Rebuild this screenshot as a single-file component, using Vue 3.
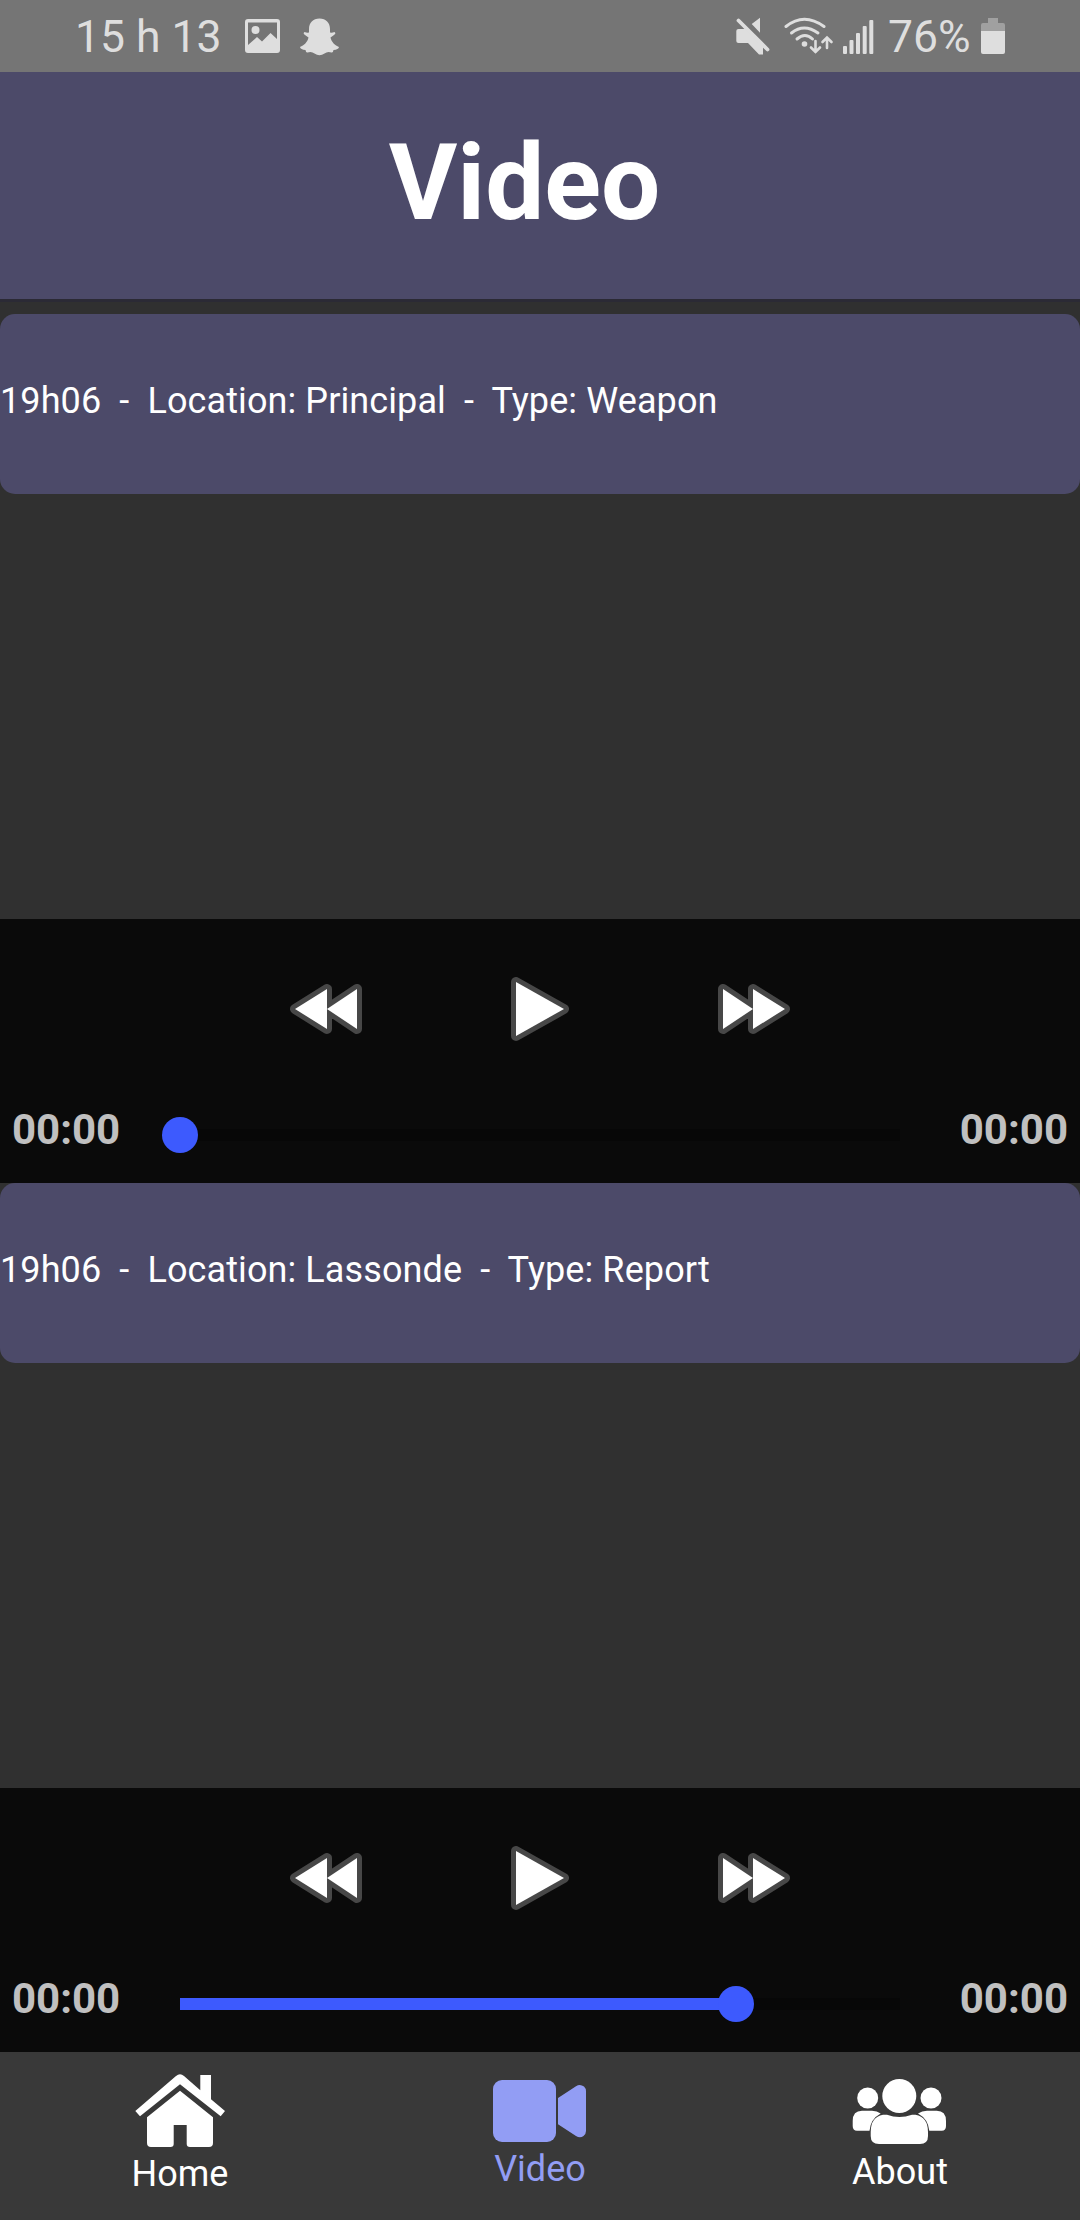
<script setup>
const videos = [
  { id: 1, time: '19h06', location: 'Principal', type: 'Weapon', progress: 0 },
  { id: 2, time: '19h06', location: 'Lassonde', type: 'Report', progress: 556 / 720 },
]

const label = (v) =>
  `${v.time}\u00a0 -\u00a0 Location: ${v.location}\u00a0 -\u00a0 Type: ${v.type}`
</script>

<template>
  <div class="screen">
    <div class="status">
      <div class="status-left">
        <span class="clock">15 h 13</span>
        <svg class="picture" viewBox="0 0 35 34">
          <path fill-rule="evenodd" d="M3 0H32Q35 0 35 3V31Q35 34 32 34H3Q0 34 0 31V3Q0 0 3 0ZM3 3.5V26L12 18L17 22.5L25.500 14L32 20V3.500Z" />
          <circle cx="10.500" cy="11" r="4" />
        </svg>
        <svg class="ghost" viewBox="0 0 41 38">
          <path d="M20.500 .5C27 .5 31 5 31 11V14.500Q33 15 35.500 14Q37.500 15.500 35 17L31.500 19.500C32.500 24 36 27.500 40 29Q39.500 31.500 34.500 32Q34 35 32.500 34.500Q28.500 33 25.500 35.500Q20.500 39 15.500 35.500Q12.500 33 8.500 34.500Q7 35 6.500 32Q1.500 31.500 1 29C5 27.500 8.500 24 9.500 19.500L6 17Q3.500 15.500 5.500 14Q8 15 10 14.500V11C10 5 14 .5 20.500 .5Z" />
        </svg>
      </div>
      <div class="status-right">
        <svg class="mute" viewBox="0 0 34 38">
          <path d="M24 .7V15.700L15.700 7ZM2.500 12H9.500L27 29V37.500H23L12 26H2.500Q.3 26 .3 24V14Q.3 12 2.500 12Z" />
          <path class="line" stroke-width="3.800" d="M2.500 3.500L31.500 32.500" />
        </svg>
        <svg class="wifi" viewBox="0 0 50 38">
          <g class="line" stroke-width="3">
            <path d="M2 9.500Q20 -5 40 9.500" />
            <path d="M7.500 16Q20 6 34 16" />
            <path d="M13 22Q21 15 28.500 22" />
          </g>
          <circle cx="20.500" cy="27" r="2.800" />
          <g class="line" stroke-width="2.600">
            <path d="M31.500 24V35M27 30.500L31.500 35L36 30.500" />
            <path d="M43 31V21M38.500 25L43 20.500L47.500 25" />
          </g>
        </svg>
        <svg class="signal" viewBox="0 0 32 36">
          <rect x="1" y="27" width="4" height="8" rx="1" />
          <rect x="7.500" y="21" width="4" height="14" rx="1" />
          <rect x="14" y="14" width="4" height="21" rx="1" />
          <rect x="20.700" y="7" width="4" height="28" rx="1" />
          <rect x="27.300" y="1" width="4" height="34" rx="1" />
        </svg>
        <span class="percent">76%</span>
        <svg class="battery" viewBox="0 0 24 36">
          <path fill="#a0a0a0" d="M7 0H17V5H22Q24 5 24 7V13H0V7Q0 5 2 5H7Z" />
          <path d="M0 13H24V34Q24 36 22 36H2Q0 36 0 34Z" />
        </svg>
      </div>
    </div>

    <header class="header">
      <h1 class="title">Video</h1>
    </header>

    <main class="list">
      <section v-for="v in videos" :key="v.id" class="video">
        <p class="card">{{ label(v) }}</p>
        <div class="viewport"></div>
        <div class="player">
          <div class="buttons">
            <svg class="ctl" viewBox="0 0 72 50">
              <path class="rim" d="M67 5V45L37 25ZM37 5V45L5 25Z" />
              <path class="face" d="M67 5V45L37 25V45L5 25L37 5V25Z" />
            </svg>
            <svg class="ctl-play" viewBox="0 0 58 64">
              <path class="rim" d="M5 5V59L53 32Z" />
              <path class="face" d="M5 5V59L53 32Z" />
            </svg>
            <svg class="ctl" viewBox="0 0 72 50">
              <path class="rim" d="M5 5V45L35 25ZM35 5V45L67 25Z" />
              <path class="face" d="M5 5V45L35 25V45L67 25L35 5V25Z" />
            </svg>
          </div>
          <div class="timeline">
            <span class="time">00:00</span>
            <div class="track">
              <div class="fill" :style="{ width: v.progress * 100 + '%' }"></div>
              <div class="thumb"></div>
            </div>
            <span class="time">00:00</span>
          </div>
        </div>
      </section>
    </main>

    <nav class="tabs">
      <a class="tab home">
        <svg viewBox="0 0 100 80">
          <path d="M5.300 41L46 6Q50 2.500 54 6L70.300 20.300V5H81V29.300L95 41L90.700 46.300L50 14.300L10 46.300Z" />
          <path d="M50 20.700L83 47.300V73Q83 77 79 77H60Q56.700 77 56.700 74V55H43.700V74Q43.700 77 40.500 77H21Q17 77 17 73V47.300Z" />
        </svg>
        <span>Home</span>
      </a>
      <a class="tab camera active">
        <svg viewBox="0 0 100 80">
          <rect x="3" y="10" width="63" height="62" rx="9" />
          <path d="M68 28L86 16.200Q90 13.500 94 16.500Q96 18.500 96 21V61Q96 64 93.500 66Q90 68.500 86 66L68 54.300Z" />
        </svg>
        <span>Video</span>
      </a>
      <a class="tab people">
        <svg viewBox="0 0 100 80">
          <circle cx="17.700" cy="28" r="10.500" />
          <circle cx="81" cy="28" r="10.500" />
          <path d="M12 40.700H22Q27 40.700 30.700 43.500Q20.500 49 19.500 60.700H7Q2.700 60.700 2.700 56V51Q2.700 40.700 12 40.700Z" />
          <path d="M86.700 40.700H77Q72 40.700 68 43.500Q78.200 49 79.300 60.700H91.700Q96 60.700 96 56V51Q96 40.700 86.700 40.700Z" />
          <circle cx="49.300" cy="26" r="17" />
          <path d="M33 44.700H37Q49.300 49.500 62 44.700H65.500Q78 47 78 62V66Q78 74 70 74H29Q20.700 74 20.700 66V62Q20.700 47 33 44.700Z" />
        </svg>
        <span>About</span>
      </a>
    </nav>
  </div>
</template>

<style>
body {
  margin: 0;
  background: #303030;
}
</style>

<style scoped>
.screen {
  display: flex;
  flex-direction: column;
  width: 1080px;
  height: 2220px;
  overflow: hidden;
  background: #303030;
  color: #fff;
  font-family: Roboto, "Liberation Sans", sans-serif;
}
svg {
  display: block;
  flex: none;
}
.status {
  display: flex;
  justify-content: space-between;
  height: 72px;
  padding: 0 75px;
  box-sizing: border-box;
  background: #757575;
  color: #dedede;
  font-size: 44.5px;
  line-height: 75px;
}
.status svg {
  fill: #dedede;
}
.status-left,
.status-right {
  display: flex;
  align-items: flex-start;
  white-space: nowrap;
}
.clock {
  width: 170px;
}
.status .line {
  fill: none;
  stroke: #dedede;
  stroke-linecap: round;
}
.picture {
  width: 35px;
  height: 34px;
  margin-top: 19px;
}
.ghost {
  width: 41px;
  height: 38px;
  margin: 18px 0 0 19px;
}
.mute {
  width: 34px;
  height: 38px;
  margin-top: 17px;
}
.wifi {
  width: 50px;
  height: 38px;
  margin: 17px 0 0 14px;
}
.signal {
  width: 32px;
  height: 36px;
  margin: 19px 0 0 8px;
}
.percent {
  width: 93px;
  margin-left: 14px;
}
.battery {
  width: 24px;
  height: 36px;
  margin-top: 18px;
}
.header {
  height: 227px;
  padding-right: 31px;
  box-sizing: border-box;
  background: #4c4a69;
  box-shadow: 0 3px 0 #2b2a35;
}
.title {
  margin: 0;
  font-size: 105px;
  font-weight: 700;
  line-height: 223px;
  text-align: center;
}
.list {
  display: flex;
  flex-direction: column;
  margin-top: 15px;
}
.card {
  height: 180px;
  margin: 0;
  padding-top: 66px;
  box-sizing: border-box;
  border-radius: 15px;
  background: #4c4a69;
  font-size: 36px;
  letter-spacing: 0.1px;
  line-height: 42px;
  white-space: nowrap;
}
.viewport {
  height: 425px;
}
.player {
  height: 264px;
  background: #0a0a0a;
}
.buttons {
  display: flex;
  align-items: center;
  justify-content: space-between;
  height: 180px;
  padding: 0 290px;
}
.ctl {
  width: 72px;
  height: 50px;
}
.ctl-play {
  width: 58px;
  height: 64px;
}
.rim {
  fill: #474747;
  stroke: #474747;
  stroke-width: 10px;
  stroke-linejoin: round;
}
.face {
  fill: #fff;
}
.timeline {
  display: flex;
  justify-content: space-between;
  padding: 0 12px;
}
.time {
  color: #c0c0c0;
  font-size: 42px;
  font-weight: 700;
  line-height: 61px;
}
.track {
  display: flex;
  align-items: center;
  width: 720px;
  height: 12px;
  margin-top: 30px;
  background: #070707;
}
.fill {
  height: 12px;
  background: #3d5afe;
}
.thumb {
  flex: none;
  width: 36px;
  height: 36px;
  margin-left: -18px;
  border-radius: 50%;
  background: #3d5afe;
}
.tabs {
  display: flex;
  height: 168px;
  background: #393939;
}
.tab {
  display: flex;
  flex: 1;
  flex-direction: column;
  align-items: center;
  padding-top: 18px;
  font-size: 36px;
  line-height: 42px;
}
.tab svg {
  width: 100px;
  height: 80px;
  fill: currentColor;
}
.active {
  color: #929df4;
}
.home span {
  margin-top: 3px;
}
.camera span {
  margin-top: -2px;
}
.people span {
  margin-top: 1px;
}
</style>
